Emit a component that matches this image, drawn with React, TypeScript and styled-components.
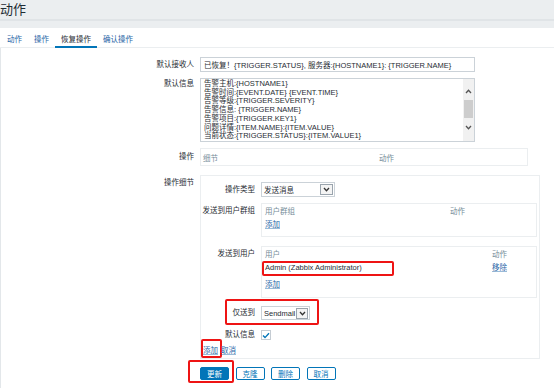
import React from "react";
import styled, { createGlobalStyle } from "styled-components";

const GlobalStyle = createGlobalStyle`
  html, body { margin: 0; padding: 0; background: #ffffff; }
  body {
    width: 554px; height: 388px; overflow: hidden;
    font-family: "Liberation Sans", Arial, "Noto Sans CJK SC", sans-serif;
    font-size: 7.5px; color: #1f2c33;
  }
  * { box-sizing: border-box; }
`;

const Page = styled.div`
  width: 554px; height: 388px; display: flex; flex-direction: column; overflow: hidden;
`;

const Header = styled.header`
  height: 28px; background: #ebeef0; display: flex; flex-direction: column;
`;

const Title = styled.h1`
  margin: 0; height: 21px; border-bottom: 2px solid #e0e4e7;
  font-size: 13px; font-weight: normal; line-height: 20px; padding-left: 0;
  color: #1f2c33;
`;

const TabBar = styled.nav`
  height: 20px; display: flex; padding-left: 1px; border-bottom: 1px solid #ebeef0;
`;

const Tab = styled.div<{ $active?: boolean }>`
  padding: 3px 6px 0; display: flex; align-items: center;
  color: ${(p) => (p.$active ? "#1f2c33" : "#1f65a6")};
  border-bottom: 2px solid ${(p) => (p.$active ? "#0275b8" : "transparent")};
  margin-bottom: -1px;
`;

const Body = styled.main`
  flex: 1; border-left: 1px solid #e3e7ea; padding-top: 9px;
`;

const FormRow = styled.div<{ $mt?: number }>`
  display: grid; grid-template-columns: 193px 1fr; column-gap: 6px;
  margin-top: ${(p) => p.$mt ?? 0}px;
`;

const Label = styled.div<{ $pt?: number }>`
  position: relative; text-align: right; line-height: 10px; white-space: nowrap;
  padding-top: ${(p) => p.$pt ?? 0}px;
  align-self: ${(p) => (p.$pt !== undefined ? "start" : "center")};
`;

const TextInput = styled.div`
  width: 275px; height: 15px; border: 1px solid #cbd2d8; padding: 0 3px;
  display: flex; align-items: center; white-space: nowrap; overflow: hidden;
`;

const TextArea = styled.div`
  width: 275px; height: 64px; border: 1px solid #cbd2d8; display: flex; overflow: hidden;
`;

const TextLines = styled.div`
  flex: 1; padding: 1px 3px 0; line-height: 8.7px; white-space: nowrap; overflow: hidden;
`;

const ScrollBar = styled.div`
  width: 11px; background: #f1f1f1; display: flex; flex-direction: column; align-items: center;
  padding-top: 8px;
`;

const ScrollArrow = styled.div<{ $mt?: number }>`
  width: 11px; height: 9px; display: flex; align-items: center; justify-content: center;
  margin-top: ${(p) => p.$mt ?? 0}px;
`;

const Thumb = styled.div`
  width: 9px; height: 18px; margin-top: 4px; background: #cdcdcd;
`;

const OpsBox = styled.div`
  width: 328px; height: 18px; border: 1px solid #ebeef0; display: grid;
  grid-template-columns: 176px 1fr; align-items: center; padding-left: 2px; color: #768d99;
`;

const DetailsBox = styled.div`
  width: 340px; border: 1px solid #ebeef0; padding: 6px 2px 1px 0;
`;

const DetailRow = styled.div<{ $mt?: number }>`
  display: grid; grid-template-columns: 54px 1fr; column-gap: 6px;
  margin-top: ${(p) => p.$mt ?? 0}px;
`;

const Select = styled.div<{ $w: number; $h: number }>`
  width: ${(p) => p.$w}px; height: ${(p) => p.$h}px; border: 1px solid #cbd2d8;
  display: flex; align-items: center; justify-content: space-between; gap: 1px;
  padding: 0 1px 0 2px; white-space: nowrap;
`;

const SelectButton = styled.div<{ $w: number }>`
  flex: none; width: ${(p) => p.$w}px; height: 11px; border: 1px solid #9aa4ad; background: #f4f4f4;
  display: flex; align-items: center; justify-content: center;
`;

const ListBox = styled.div<{ $h: number; $col: number }>`
  width: 276px; height: ${(p) => p.$h}px; border: 1px solid #ebeef0;
  display: grid; grid-template-columns: ${(p) => p.$col}px 1fr; align-content: start;
  padding: 3px 3px 0; line-height: 10px;
`;

const HeadCell = styled.div`
  color: #768d99;
`;

const Cell = styled.div<{ $mt?: number }>`
  position: relative; margin-top: ${(p) => p.$mt ?? 0}px; white-space: nowrap;
`;

const Link = styled.a`
  position: relative; color: #1f65a6; text-decoration: underline;
  text-decoration-color: rgba(31, 101, 166, 0.45); text-underline-offset: 1px; cursor: pointer;
`;

const CheckBox = styled.div`
  width: 10px; height: 10px; border: 1px solid #c5ccd3; display: flex;
  align-items: center; justify-content: center; background: #fff;
`;

const LinkRow = styled.div`
  display: flex; gap: 3px; padding-left: 2px; margin-top: 5px; line-height: 12px;
`;

const ButtonRow = styled.div`
  display: flex; gap: 6.5px; padding-left: 199px; margin-top: 8px;
`;

const Button = styled.button<{ $primary?: boolean }>`
  position: relative; width: 29px; height: 13px; padding: 0; font: inherit;
  border: 1px solid #0275b8; border-radius: 2px;
  background: ${(p) => (p.$primary ? "#0275b8" : "#ffffff")};
  color: ${(p) => (p.$primary ? "#ffffff" : "#0275b8")};
`;

const Highlight = styled.span<{ $l: number; $t: number; $w: number; $h: number }>`
  position: absolute; left: ${(p) => p.$l}px; top: ${(p) => p.$t}px;
  width: ${(p) => p.$w}px; height: ${(p) => p.$h}px;
  border: 2px solid #ee1414; border-radius: 2px; pointer-events: none;
`;

const Chevron = ({ up, color = "#333" }: { up?: boolean; color?: string }) => (
  <svg width="7" height="5" viewBox="0 0 7 5">
    <polyline
      points={up ? "1,4 3.5,1.3 6,4" : "1,1 3.5,3.7 6,1"}
      fill="none"
      stroke={color}
      strokeWidth="1.3"
    />
  </svg>
);

const Check = () => (
  <svg width="8" height="7" viewBox="0 0 8 7">
    <polyline points="1,3.6 3,5.6 7,1.2" fill="none" stroke="#0275b8" strokeWidth="1.4" />
  </svg>
);

const messageLines = [
  "告警主机:{HOSTNAME1}",
  "告警时间:{EVENT.DATE} {EVENT.TIME}",
  "告警等级:{TRIGGER.SEVERITY}",
  "告警信息: {TRIGGER.NAME}",
  "告警项目:{TRIGGER.KEY1}",
  "问题详情:{ITEM.NAME}:{ITEM.VALUE}",
  "当前状态:{TRIGGER.STATUS}:{ITEM.VALUE1}",
];

export default function App() {
  return (
    <>
      <GlobalStyle />
      <Page>
        <Header>
          <Title>动作</Title>
        </Header>
        <TabBar>
          <Tab>动作</Tab>
          <Tab>操作</Tab>
          <Tab $active>恢复操作</Tab>
          <Tab>确认操作</Tab>
        </TabBar>
        <Body>
          <FormRow>
            <Label>默认接收人</Label>
            <TextInput>
              已恢复！{"{TRIGGER.STATUS}"}, 服务器:{"{HOSTNAME1}"}: {"{TRIGGER.NAME}"}
            </TextInput>
          </FormRow>
          <FormRow $mt={6}>
            <Label $pt={1}>默认信息</Label>
            <TextArea>
              <TextLines>
                {messageLines.map((l) => (
                  <div key={l}>{l}</div>
                ))}
              </TextLines>
              <ScrollBar>
                <ScrollArrow>
                  <Chevron up color="#555" />
                </ScrollArrow>
                <Thumb />
                <ScrollArrow $mt={5}>
                  <Chevron color="#555" />
                </ScrollArrow>
              </ScrollBar>
            </TextArea>
          </FormRow>
          <FormRow $mt={6}>
            <Label>操作</Label>
            <OpsBox>
              <span>细节</span>
              <span>动作</span>
            </OpsBox>
          </FormRow>
          <FormRow $mt={9}>
            <Label $pt={3}>操作细节</Label>
            <DetailsBox>
              <DetailRow>
                <Label>操作类型</Label>
                <Select $w={74} $h={15}>
                  <span>发送消息</span>
                  <SelectButton $w={13}>
                    <Chevron />
                  </SelectButton>
                </Select>
              </DetailRow>
              <DetailRow $mt={6}>
                <Label $pt={3}>发送到用户群组</Label>
                <ListBox $h={34} $col={185}>
                  <HeadCell>用户群组</HeadCell>
                  <HeadCell>动作</HeadCell>
                  <Cell $mt={3}>
                    <Link>添加</Link>
                  </Cell>
                </ListBox>
              </DetailRow>
              <DetailRow $mt={9}>
                <Label $pt={3}>发送到用户</Label>
                <ListBox $h={52} $col={227}>
                  <HeadCell>用户</HeadCell>
                  <HeadCell>动作</HeadCell>
                  <Cell $mt={3}>
                    Admin (Zabbix Administrator)
                    <Highlight $l={-3} $t={-2} $w={132} $h={15} />
                  </Cell>
                  <Cell $mt={3}>
                    <Link>移除</Link>
                  </Cell>
                  <Cell $mt={7}>
                    <Link>添加</Link>
                  </Cell>
                </ListBox>
              </DetailRow>
              <DetailRow $mt={8}>
                <Label>
                  仅送到
                  <Highlight $l={24} $t={-9} $w={94} $h={26} />
                </Label>
                <Select $w={49} $h={14}>
                  <span>Sendmail</span>
                  <SelectButton $w={12}>
                    <Chevron />
                  </SelectButton>
                </Select>
              </DetailRow>
              <DetailRow $mt={10}>
                <Label>默认信息</Label>
                <CheckBox>
                  <Check />
                </CheckBox>
              </DetailRow>
              <LinkRow>
                <Link>
                  添加
                  <Highlight $l={-2} $t={-6} $w={21} $h={19} />
                </Link>
                <Link>取消</Link>
              </LinkRow>
            </DetailsBox>
          </FormRow>
          <ButtonRow>
            <Button $primary>
              更新
              <Highlight $l={-13} $t={-8} $w={46} $h={23} />
            </Button>
            <Button>克隆</Button>
            <Button>删除</Button>
            <Button>取消</Button>
          </ButtonRow>
        </Body>
      </Page>
    </>
  );
}
